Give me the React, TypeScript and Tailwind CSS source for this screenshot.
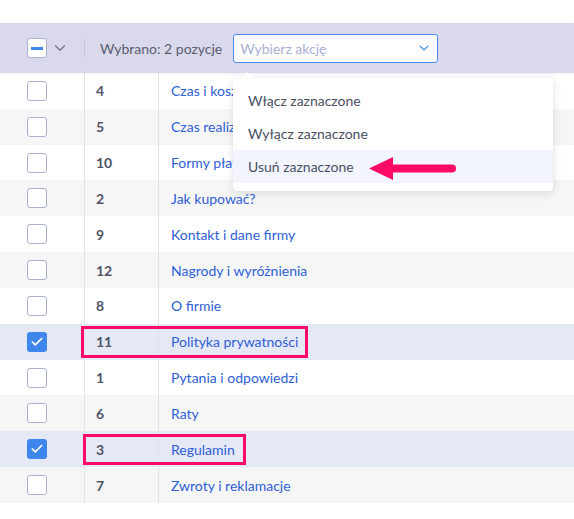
import { ChevronDown, Check } from "lucide-react";

type Row = { id: number; title: string; checked?: boolean };

const rows: Row[] = [
  { id: 4, title: "Czas i koszty dostawy" },
  { id: 5, title: "Czas realizacji zamówienia" },
  { id: 10, title: "Formy płatności" },
  { id: 2, title: "Jak kupować?" },
  { id: 9, title: "Kontakt i dane firmy" },
  { id: 12, title: "Nagrody i wyróżnienia" },
  { id: 8, title: "O firmie" },
  { id: 11, title: "Polityka prywatności", checked: true },
  { id: 1, title: "Pytania i odpowiedzi" },
  { id: 6, title: "Raty" },
  { id: 3, title: "Regulamin", checked: true },
  { id: 7, title: "Zwroty i reklamacje" },
];

function Box({ checked }: { checked?: boolean }) {
  if (checked) {
    return (
      <span className="w-5 h-5 rounded-[3px] bg-[#3f86ec] flex items-center justify-center">
        <Check className="w-3.5 h-3.5 text-white" strokeWidth={3} />
      </span>
    );
  }
  return <span className="w-5 h-5 rounded-[3px] border border-[#aab1cf] bg-white" />;
}

export default function App() {
  return (
    <div className="relative w-[574px] h-[519px] bg-white overflow-hidden font-['Lato',sans-serif] text-[14px]">
      <div className="h-[23px]" />
      <div className="h-[50px] bg-[#dad8eb] flex items-center shadow-[0_1px_2px_rgba(0,0,0,0.06)] relative z-10">
        <div className="w-[85px] pl-[27px] flex items-center gap-[4px]">
          <span className="w-5 h-5 rounded-[3px] border border-[#aab1cf] bg-white flex items-center justify-center">
            <span className="w-3 h-[3px] bg-[#3f86ec]" />
          </span>
          <ChevronDown className="w-[18px] h-[18px] text-[#6b6f85]" strokeWidth={1.5} />
        </div>
        <div className="w-px h-[18px] bg-[#c8c6da] -ml-px" />
        <span className="ml-[15px] text-[#595e73]">Wybrano: 2 pozycje</span>
        <div className="ml-[11px] w-[205px] h-[29px] rounded-[3px] border-[1.5px] border-[#4b8df8] bg-white flex items-center justify-between pl-[6px] pr-[5px]">
          <span className="text-[#a9b0d4]">Wybierz akcję</span>
          <ChevronDown className="w-4 h-4 text-[#4b8df8]" strokeWidth={1.6} />
        </div>
      </div>
      <div>
        {rows.map((r, i) => (
          <div
            key={r.id}
            className={`h-[35.83px] flex items-stretch ${
              r.checked ? "bg-[#e5e8f5]" : i % 2 === 1 ? "bg-[#f6f6f6]" : "bg-white"
            }`}
          >
            <div className="w-[85px] pl-[27px] flex items-center border-r border-[#e3e3e3]">
              <Box checked={r.checked} />
            </div>
            <div className="w-[74px] pl-[11px] flex items-center border-r border-[#e3e3e3] font-bold text-[#4f5468]">
              {r.id}
            </div>
            <div className="flex-1 pl-[12px] flex items-center text-[#2d60d6]">{r.title}</div>
          </div>
        ))}
      </div>

      {/* action dropdown */}
      <div className="absolute left-[233px] top-[78px] w-[320px] bg-white rounded-[4px] shadow-[0_2px_10px_rgba(0,0,0,0.13)] pt-[6px] pb-[8px] z-20">
        <span className="absolute -top-[4px] left-[10px] w-[9px] h-[9px] bg-white rotate-45" />
        <div className="h-[33px] flex items-center pl-[15px] text-[#4b5064]">Włącz zaznaczone</div>
        <div className="h-[33px] flex items-center pl-[15px] text-[#4b5064]">Wyłącz zaznaczone</div>
        <div className="h-[33px] flex items-center pl-[15px] text-[#4b5064] bg-[#f2f5fd]">Usuń zaznaczone</div>
      </div>

      {/* annotations */}
      <svg className="absolute left-[366px] top-[155px] z-30" width="92" height="28" viewBox="0 0 92 28">
        <path d="M26 13.5 H86" stroke="#ff0a64" strokeWidth="8" strokeLinecap="round" />
        <path d="M3 13.5 L27 2 L27 25 Z" fill="#ff0a64" />
      </svg>
      <div className="absolute left-[81px] top-[326px] w-[227px] h-[32px] border-[3px] border-[#ff0a6a] z-30" />
      <div className="absolute left-[83px] top-[434px] w-[163px] h-[31px] border-[3px] border-[#ff0a6a] z-30" />
    </div>
  );
}
